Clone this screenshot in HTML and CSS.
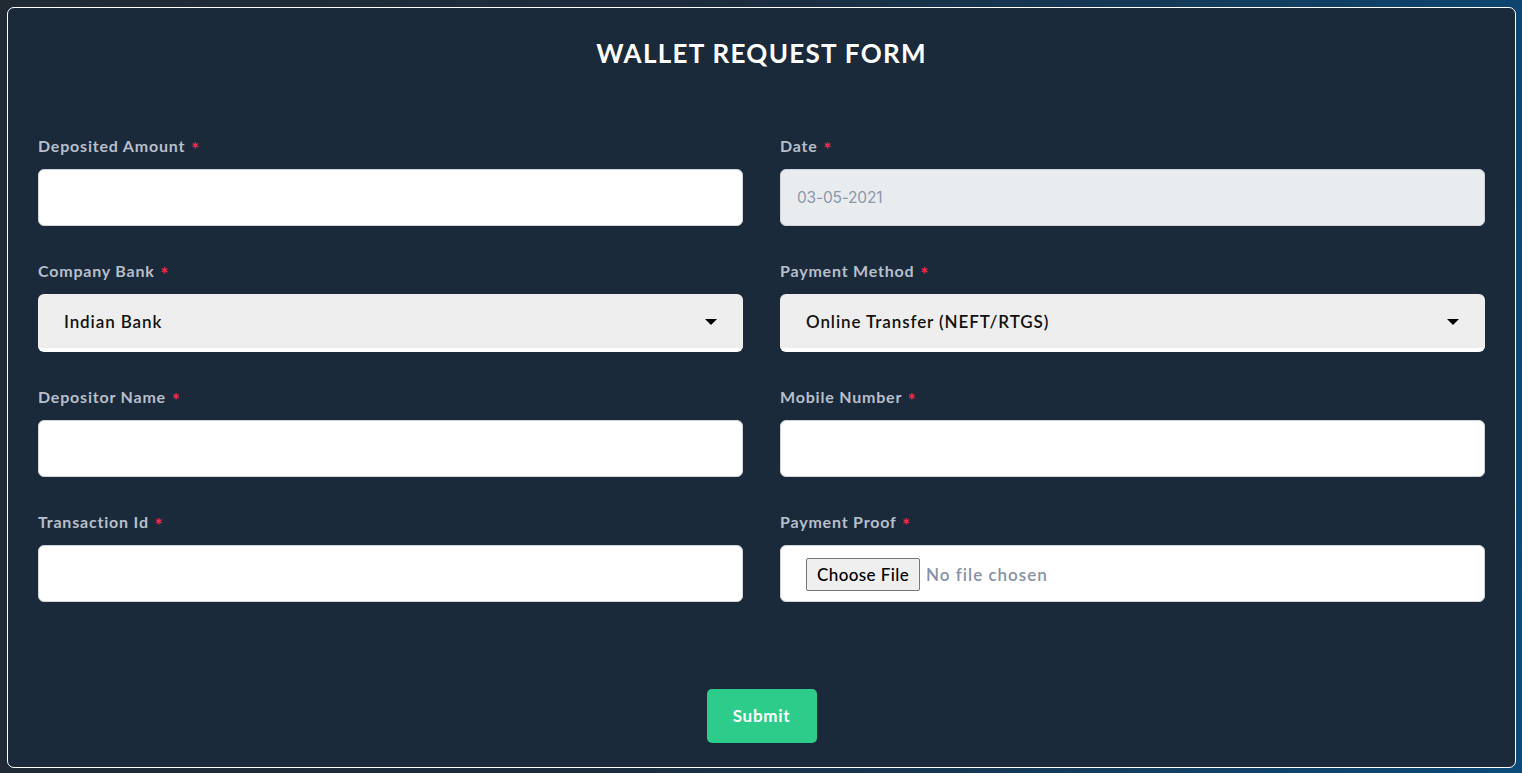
FILE: index.html
```html
<!DOCTYPE html>
<html lang="en">
<head>
<meta charset="utf-8">
<title>Wallet Request Form</title>
<link rel="stylesheet" href="styles.css">
</head>
<body>
<div class="page">
  <form class="card">
    <h1 class="title">WALLET REQUEST FORM</h1>
    <div class="grid">
      <div class="field">
        <label class="label">Deposited Amount <span class="req">*</span></label>
        <input class="control" type="text">
      </div>
      <div class="field">
        <label class="label">Date <span class="req">*</span></label>
        <input class="control control-disabled" type="text" value="03-05-2021" readonly>
      </div>
      <div class="field">
        <label class="label">Company Bank <span class="req">*</span></label>
        <div class="select"><span>Indian Bank</span><span class="caret"></span></div>
      </div>
      <div class="field">
        <label class="label">Payment Method <span class="req">*</span></label>
        <div class="select"><span>Online Transfer (NEFT/RTGS)</span><span class="caret"></span></div>
      </div>
      <div class="field">
        <label class="label">Depositor Name <span class="req">*</span></label>
        <input class="control" type="text">
      </div>
      <div class="field">
        <label class="label">Mobile Number <span class="req">*</span></label>
        <input class="control" type="text">
      </div>
      <div class="field">
        <label class="label">Transaction Id <span class="req">*</span></label>
        <input class="control" type="text">
      </div>
      <div class="field">
        <label class="label">Payment Proof <span class="req">*</span></label>
        <div class="control file"><span class="file-btn">Choose File</span><span class="file-name">No file chosen</span></div>
      </div>
    </div>
    <div class="actions">
      <button type="button" class="submit">Submit</button>
    </div>
  </form>
</div>
</body>
</html>
```
FILE: styles.css
```css
* { box-sizing: border-box; }
html, body { margin: 0; padding: 0; }
body {
  width: 1522px;
  height: 773px;
  overflow: hidden;
  font-family: "Lato", "Open Sans", sans-serif;
  background: linear-gradient(100deg, #212a34 0%, #1b2c3e 45%, #0b4a78 100%);
}
.page {
  padding: 7px 6px 5px 7px;
}
.card {
  height: 761px;
  border: 1.5px solid #ffffff;
  border-radius: 7px;
  background: #1b2a3b;
  padding: 27px 30px 0 30px;
}
.title {
  margin: 0;
  text-align: center;
  color: #ffffff;
  font-size: 26px;
  line-height: 36px;
  font-weight: 700;
  letter-spacing: 1.3px;
}
.grid {
  margin-top: 64px;
  display: grid;
  grid-template-columns: 1fr 1fr;
  column-gap: 37px;
  row-gap: 34px;
}
.field {
  display: flex;
  flex-direction: column;
}
.label {
  color: #b7bfca;
  font-size: 16px;
  line-height: 22px;
  font-weight: 700;
  letter-spacing: 0.8px;
  margin-bottom: 12px;
}
.req {
  color: #f52a4e;
  margin-left: 1px;
  font-size: 19px;
  line-height: 0;
  vertical-align: -4px;
}
.control {
  height: 57px;
  border: 1px solid #ced4da;
  border-radius: 6px;
  background: #ffffff;
  font-family: inherit;
  font-size: 16px;
  padding: 0 16px;
  outline: none;
}
.control-disabled {
  background: #e9ecef;
  color: #8a97a8;
  font-family: "Inter", sans-serif;
  font-size: 15.5px;
  letter-spacing: -0.2px;
}
.select {
  height: 58px;
  border-radius: 6px;
  background: #eeeeee;
  border-bottom: 4px solid #ffffff;
  display: flex;
  align-items: center;
  justify-content: space-between;
  padding: 1px 26px 0 26px;
  color: #111111;
  font-size: 17px;
  font-weight: 600;
  letter-spacing: 0.9px;
}
.caret {
  width: 0;
  height: 0;
  border-left: 6px solid transparent;
  border-right: 6px solid transparent;
  border-top: 6px solid #000;
}
.file {
  display: flex;
  align-items: center;
  padding: 2px 0 0 25px;
}
.file-btn {
  height: 33px;
  padding: 0 10px;
  display: flex;
  align-items: center;
  background: #efefef;
  border: 1px solid #767676;
  border-radius: 2px;
  color: #000;
  font-size: 17px;
  font-weight: 500;
  letter-spacing: 0.4px;
}
.file-name {
  margin-left: 6px;
  color: #8592a3;
  font-size: 17px;
  font-weight: 600;
  letter-spacing: 1px;
}
.actions {
  display: flex;
  justify-content: center;
  margin-top: 87px;
}
.submit {
  width: 110px;
  height: 54px;
  border: none;
  border-radius: 5px;
  background: #2ecc8a;
  color: #ffffff;
  font-family: inherit;
  font-size: 17px;
  font-weight: 700;
  letter-spacing: 0.7px;
  padding: 0 0 2px 0;
  cursor: pointer;
}
```
